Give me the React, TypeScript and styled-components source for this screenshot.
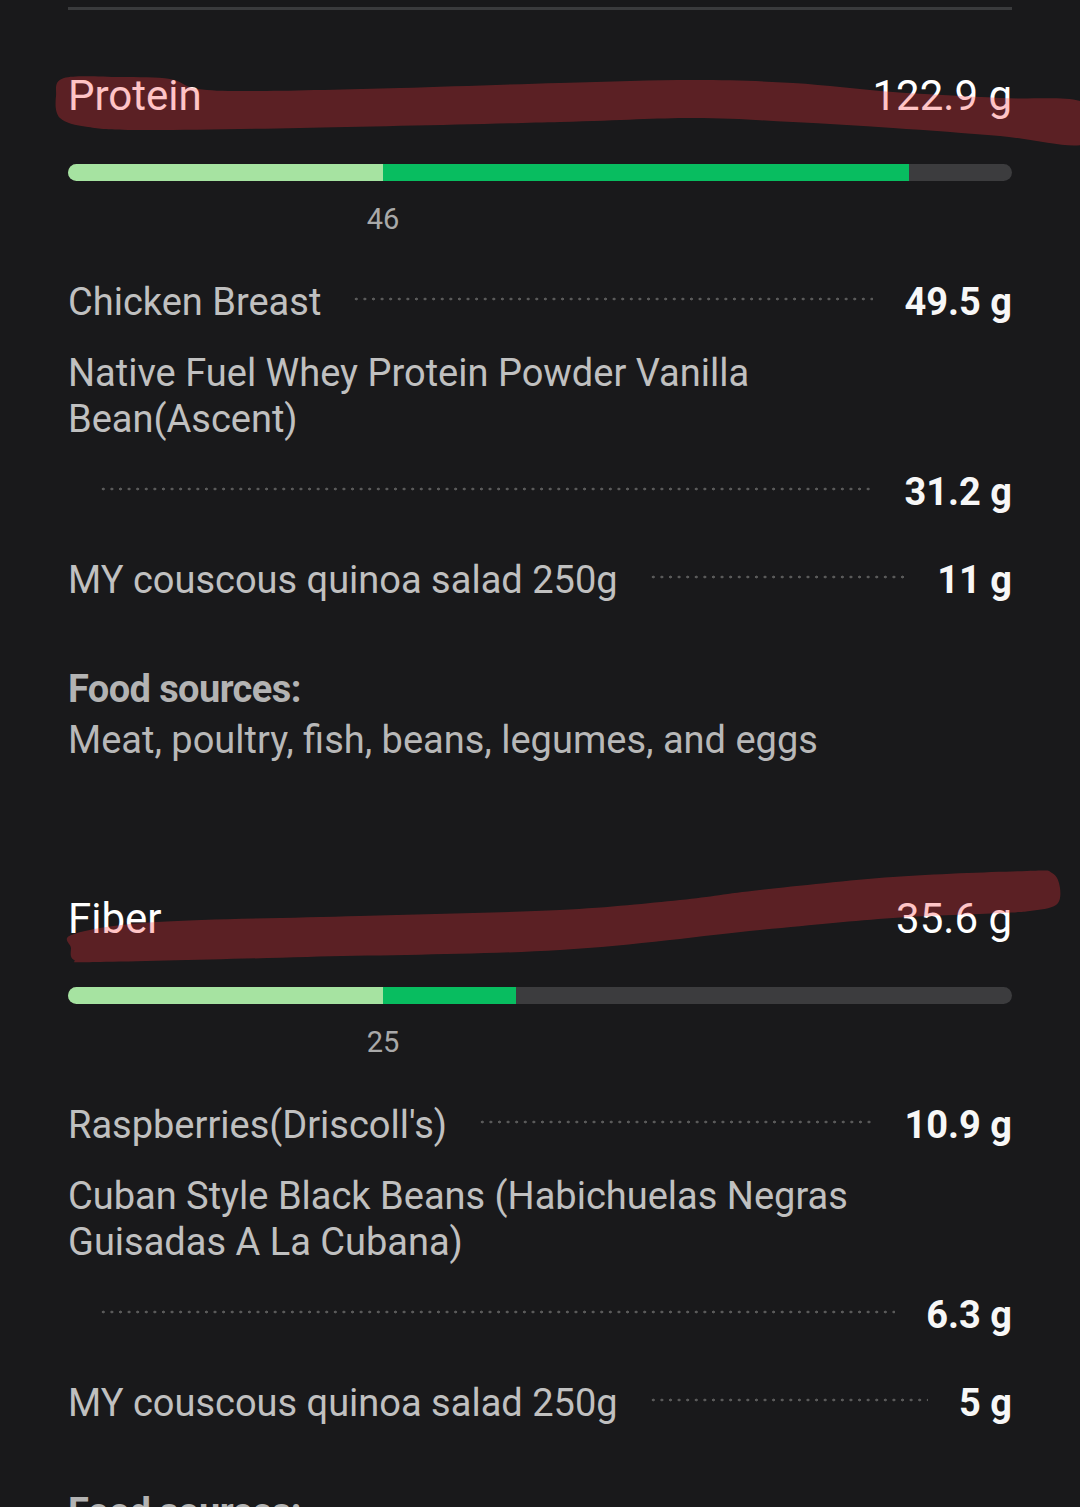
import React from "react";
import styled, { createGlobalStyle } from "styled-components";

const GlobalStyle = createGlobalStyle`
  html, body {
    margin: 0;
    padding: 0;
    background: #19191b;
  }
  body {
    font-family: Roboto, "Noto Sans", "Liberation Sans", sans-serif;
    overflow-x: hidden;
  }
  * { box-sizing: border-box; }
`;

const Page = styled.div`
  width: 1080px;
  min-height: 1507px;
  padding: 7px 68px 0;
  background: #19191b;
`;

const TopRule = styled.div`
  height: 3px;
  background: #3a3b3d;
`;

const Section = styled.section<{ $gap: number }>`
  margin-top: ${(p) => p.$gap}px;
`;

const Header = styled.div`
  position: relative;
  display: flex;
  justify-content: space-between;
  align-items: baseline;
  font-size: 42px;
  line-height: 50px;
  color: #ffffff;
`;

const HighlightSvg = styled.svg`
  position: absolute;
  left: -68px;
  top: -40px;
  width: 1080px;
  height: 130px;
  pointer-events: none;
  z-index: 2;
`;

const Track = styled.div`
  margin-top: 43px;
  display: flex;
  height: 17px;
  border-radius: 9px;
  overflow: hidden;
  background: #3c3c3e;
`;

const Segment = styled.div<{ $color: string }>`
  height: 100%;
  background: ${(p) => p.$color};
`;

const GoalRow = styled.div`
  margin-top: 21px;
  display: flex;
  font-size: 29px;
  line-height: 34px;
  color: #a9a9a9;
`;

const GoalMark = styled.div`
  display: flex;
  justify-content: flex-end;
`;

const GoalText = styled.span`
  transform: translateX(50%);
`;

const List = styled.div`
  margin-top: 31px;
`;

const Item = styled.div<{ $wrapped?: boolean }>`
  padding: 12px 0 ${(p) => (p.$wrapped ? 30 : 13)}px;
  font-size: 38px;
  line-height: 46px;
`;

const Line = styled.div`
  display: flex;
  align-items: center;
`;

const ValueLine = styled(Line)`
  margin-top: 27px;
`;

const Name = styled.span`
  color: #c0c0c0;
  white-space: nowrap;
`;

const NameBlock = styled.div`
  color: #c0c0c0;
`;

const Leader = styled.span`
  flex: 1;
  height: 4px;
  margin: 0 31px 6px;
  background-image: radial-gradient(circle, #5a5a5a 1.2px, transparent 1.7px);
  background-size: 8.6px 4px;
  background-repeat: repeat-x;
  background-position: 0 0;
`;

const Value = styled.span`
  color: #f7f7f7;
  font-weight: 700;
  white-space: nowrap;
`;

const SourcesTitle = styled.div`
  margin-top: 50px;
  font-size: 38px;
  line-height: 46px;
  font-weight: 700;
  color: #b3b3b3;
  letter-spacing: -0.6px;
`;

const SourcesText = styled.div`
  margin-top: 5px;
  font-size: 38px;
  line-height: 46px;
  color: #b8b8b8;
`;

type Pt = [number, number];

function smoothClosed(pts: Pt[]): string {
  const n = pts.length;
  let d = `M ${pts[0][0]} ${pts[0][1]}`;
  for (let i = 0; i < n; i++) {
    const p0 = pts[(i - 1 + n) % n];
    const p1 = pts[i];
    const p2 = pts[(i + 1) % n];
    const p3 = pts[(i + 2) % n];
    const c1x = p1[0] + (p2[0] - p0[0]) / 6;
    const c1y = p1[1] + (p2[1] - p0[1]) / 6;
    const c2x = p2[0] - (p3[0] - p1[0]) / 6;
    const c2y = p2[1] - (p3[1] - p1[1]) / 6;
    d += ` C ${c1x.toFixed(1)} ${c1y.toFixed(1)} ${c2x.toFixed(1)} ${c2y.toFixed(1)} ${p2[0]} ${p2[1]}`;
  }
  return d + " Z";
}

type Food = { lines: string[]; value: string };

type Nutrient = {
  name: string;
  total: string;
  top: number;
  light: number;
  green: number;
  goal: string;
  foods: Food[];
  sources: string;
  stroke: Pt[];
  gap: number;
};

const nutrients: Nutrient[] = [
  {
    name: "Protein",
    total: "122.9 g",
    top: 71,
    light: 33.37,
    green: 55.72,
    goal: "46",
    gap: 61,
    foods: [
      { lines: ["Chicken Breast"], value: "49.5 g" },
      {
        lines: ["Native Fuel Whey Protein Powder Vanilla", "Bean(Ascent)"],
        value: "31.2 g",
      },
      { lines: ["MY couscous quinoa salad 250g"], value: "11 g" },
    ],
    sources: "Meat, poultry, fish, beans, legumes, and eggs",
    stroke: [
      [64, 78],
      [120, 77],
      [170, 79],
      [198, 89],
      [260, 91],
      [400, 88],
      [560, 83],
      [693, 80],
      [793, 83],
      [893, 92],
      [1000, 98],
      [1085, 103],
      [1085, 144],
      [1000, 136],
      [893, 128],
      [793, 122],
      [693, 118],
      [560, 122],
      [300, 128],
      [140, 130],
      [88, 127],
      [60, 118],
      [56, 96],
    ],
  },
  {
    name: "Fiber",
    total: "35.6 g",
    top: 894,
    light: 33.37,
    green: 14.09,
    goal: "25",
    gap: 131,
    foods: [
      { lines: ["Raspberries(Driscoll's)"], value: "10.9 g" },
      {
        lines: ["Cuban Style Black Beans (Habichuelas Negras", "Guisadas A La Cubana)"],
        value: "6.3 g",
      },
      { lines: ["MY couscous quinoa salad 250g"], value: "5 g" },
    ],
    sources: "",
    stroke: [
      [74, 934],
      [157, 922],
      [360, 916],
      [560, 910],
      [680, 900],
      [760, 890],
      [893, 877],
      [1027, 871],
      [1052, 873],
      [1060, 888],
      [1056, 905],
      [1030, 911],
      [1000, 913],
      [893, 918],
      [760, 930],
      [560, 950],
      [307, 957],
      [100, 962],
      [74, 960],
      [71, 948],
    ],
  },
];

function FoodItem({ food }: { food: Food }) {
  if (food.lines.length > 1) {
    return (
      <Item $wrapped>
        <NameBlock>
          {food.lines.map((l, i) => (
            <div key={i}>{l}</div>
          ))}
        </NameBlock>
        <ValueLine>
          <Leader />
          <Value>{food.value}</Value>
        </ValueLine>
      </Item>
    );
  }
  return (
    <Item>
      <Line>
        <Name>{food.lines[0]}</Name>
        <Leader />
        <Value>{food.value}</Value>
      </Line>
    </Item>
  );
}

function NutrientSection({ n }: { n: Nutrient }) {
  return (
    <Section $gap={n.gap}>
      <Header>
        <span>{n.name}</span>
        <span>{n.total}</span>
        <HighlightSvg viewBox={`0 ${n.top - 40} 1080 130`} preserveAspectRatio="none">
          <path d={smoothClosed(n.stroke)} fill="rgba(255, 52, 58, 0.29)" />
        </HighlightSvg>
      </Header>
      <Track>
        <Segment $color="#a6e3a1" style={{ width: `${n.light}%` }} />
        <Segment $color="#08bd60" style={{ width: `${n.green}%` }} />
      </Track>
      <GoalRow>
        <GoalMark style={{ width: `${n.light}%` }}>
          <GoalText>{n.goal}</GoalText>
        </GoalMark>
      </GoalRow>
      <List>
        {n.foods.map((f, i) => (
          <FoodItem key={i} food={f} />
        ))}
      </List>
      <SourcesTitle>Food sources:</SourcesTitle>
      {n.sources && <SourcesText>{n.sources}</SourcesText>}
    </Section>
  );
}

export default function App() {
  return (
    <>
      <GlobalStyle />
      <Page>
        <TopRule />
        {nutrients.map((n) => (
          <NutrientSection key={n.name} n={n} />
        ))}
      </Page>
    </>
  );
}
